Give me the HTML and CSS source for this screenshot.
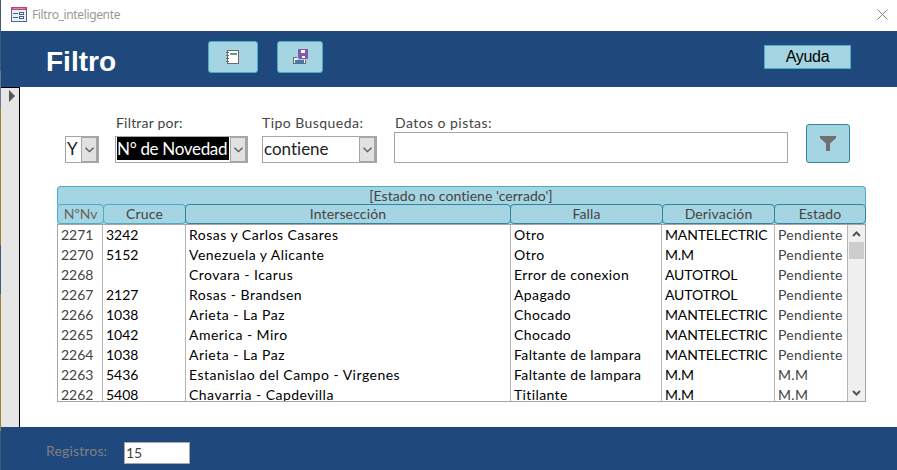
FILE: index.html
```html
<!DOCTYPE html>
<html lang="es">
<head>
<meta charset="utf-8">
<title>Filtro_inteligente</title>
<link rel="stylesheet" href="styles.css">
</head>
<body>
<div class="window">
  <div class="titlebar">
    <svg class="app-icon" width="16" height="15" viewBox="0 0 16 15" shape-rendering="crispEdges">
      <rect width="16" height="15" fill="#52678c"/><rect x="1" y="3" width="14" height="11" fill="#e9f0f8"/>
      <rect width="16" height="3" fill="#b94873"/><path d="M2 1.5h12" stroke="#d98aa8"/>
      <path d="M2 6.500h5M2 10.500h5" stroke="#3f5f91"/>
      <path d="M8.500 5.500h4v2h-4zM8.500 9.500h4v2h-4z" fill="#fff" stroke="#3f5f91"/>
    </svg>
    <span class="title">Filtro_inteligente</span>
    <svg class="close" width="11" height="11" viewBox="0 0 11 11"><path d="M.5.5l10 10M10.500.5l-10 10" stroke="#868686"/></svg>
  </div>
  <header class="header">
    <h1>Filtro</h1>
    <button class="btn btn-report" aria-label="Informe">
      <svg width="13" height="15" viewBox="0 0 13 15" shape-rendering="crispEdges">
        <path d="M1.500 .5h11v13h-11z" fill="#fff" stroke="#6a6a6a"/>
        <path d="M4 4h7" stroke="#5d9c83" stroke-width="2"/>
        <path d="M0 2.500h3M0 5.500h3M0 8.500h3M0 11.500h3" stroke="#6a6a6a"/>
      </svg>
    </button>
    <button class="btn btn-save" aria-label="Guardar">
      <svg width="15" height="16" viewBox="0 0 15 16" shape-rendering="crispEdges">
        <path d="M.5 8.500h12v6H.5z" fill="#fff" stroke="#6a6a6a"/><path d="M2 11h9v3H2z" fill="#4279b8"/>
        <path d="M4 0h11v11H4z" fill="#a4d5e2"/><path d="M5 0h10v10H6L5 9z" fill="#8757ab"/>
        <path d="M8 1h4v3H8zM9 7h3v2H9z" fill="#fff"/>
      </svg>
    </button>
    <button class="help">Ayuda</button>
  </header>
  <main class="body">
    <div class="selector"><svg width="6" height="12" viewBox="0 0 6 12"><path d="M0 0l6 6-6 6z" fill="#555"/></svg></div>
    <div class="content">
      <div class="filters">
        <div class="combo combo-y"><span>Y</span><i><svg width="9" height="6" viewBox="0 0 9 6"><path d="M.5.7l4 4 4-4"/></svg></i></div>
        <div class="field by"><label>Filtrar por:</label>
          <div class="combo"><span class="selected">N° de Novedad</span><i><svg width="9" height="6" viewBox="0 0 9 6"><path d="M.5.7l4 4 4-4"/></svg></i></div></div>
        <div class="field kind"><label>Tipo Busqueda:</label>
          <div class="combo"><span>contiene</span><i><svg width="9" height="6" viewBox="0 0 9 6"><path d="M.5.7l4 4 4-4"/></svg></i></div></div>
        <div class="field data"><label>Datos o pistas:</label><div class="textbox"></div></div>
        <button class="btn btn-filter" aria-label="Filtrar"><svg width="16" height="15" viewBox="0 0 16 15"><path d="M0 0h16v2l-6 5.500V15H6V7.500L0 2z" fill="#707070"/></svg></button>
      </div>
      <section class="results">
        <div class="criteria">[Estado no contiene 'cerrado']</div>
        <div class="heads">
          <div class="light nv">NºNv</div><div class="light">Cruce</div><div>Intersección</div><div>Falla</div><div>Derivación</div><div>Estado</div>
        </div>
        <div class="list">
          <div class="col gray"><p>2271</p><p>2270</p><p>2268</p><p>2267</p><p>2266</p><p>2265</p><p>2264</p><p>2263</p><p>2262</p></div>
          <div class="col"><p>3242</p><p>5152</p><p></p><p>2127</p><p>1038</p><p>1042</p><p>1038</p><p>5436</p><p>5408</p></div>
          <div class="col place"><p>Rosas y Carlos Casares</p><p>Venezuela y Alicante</p><p>Crovara - Icarus</p><p>Rosas - Brandsen</p><p>Arieta - La Paz</p><p>America - Miro</p><p>Arieta - La Paz</p><p>Estanislao del Campo - Virgenes</p><p>Chavarria - Capdevilla</p></div>
          <div class="col fault"><p>Otro</p><p>Otro</p><p>Error de conexion</p><p>Apagado</p><p>Chocado</p><p>Chocado</p><p>Faltante de lampara</p><p>Faltante de lampara</p><p>Titilante</p></div>
          <div class="col derived"><p>MANTELECTRIC</p><p>M.M</p><p>AUTOTROL</p><p>AUTOTROL</p><p>MANTELECTRIC</p><p>MANTELECTRIC</p><p>MANTELECTRIC</p><p>M.M</p><p>M.M</p></div>
          <div class="col gray state"><p>Pendiente</p><p>Pendiente</p><p>Pendiente</p><p>Pendiente</p><p>Pendiente</p><p>Pendiente</p><p>Pendiente</p><p>M.M</p><p>M.M</p></div>
          <div class="scroll">
            <svg width="9" height="6" viewBox="0 0 9 6"><path d="M1 5l3.500-3.500L8 5"/></svg>
            <div class="thumb"></div>
            <svg width="9" height="6" viewBox="0 0 9 6"><path d="M1 1l3.500 3.500L8 1"/></svg>
          </div>
        </div>
      </section>
    </div>
  </main>
  <footer class="footer"><span>Registros:</span><div class="count">15</div></footer>
</div>
</body>
</html>
```
FILE: styles.css
```css
* { box-sizing: border-box; }
body { margin: 0; width: 897px; height: 470px; overflow: hidden; background: #fff; color: #444; font: 14px/20px Lato, "Liberation Sans", sans-serif; font-variant-ligatures: none; }
svg { display: block; flex: none; }
p, h1 { margin: 0; }
button { padding: 0; font: inherit; }
.window { height: 470px; display: flex; flex-direction: column; border-left: 1px solid; border-image: linear-gradient(#3f5b7e 0 72px, #66789a 72px 109px, #98832f 109px 245px, #3f5b7e 245px 294px, #98832f 294px 430px, #3f5b7e 430px) 1; }
.titlebar { height: 31px; display: flex; align-items: center; padding: 0 9px 0 10px; }
.app-icon { margin-top: -3px; }
.title { margin: -1px auto 0 5px; font: 12px/20px "Noto Sans", sans-serif; letter-spacing: -.36px; color: #999; }
.close { margin-top: -2px; }
.header { height: 56px; display: flex; align-items: flex-start; background: #1f497d; }
h1 { width: 162px; margin: 15px 0 0 45px; color: #fff; font: bold 28px/32px "Liberation Sans", sans-serif; }
.btn { display: flex; align-items: center; justify-content: center; border: 1px solid #4bacc6; border-radius: 3px; background: #a5d5e2; }
.btn-report { width: 50px; height: 32px; margin-top: 10px; }
.btn-report svg { margin-left: -2px; }
.btn-save { width: 46px; height: 32px; margin: 10px 0 0 19px; }
.btn-save svg { margin-top: -1px; margin-left: 1px; }
.help { width: 87px; height: 24px; margin: 14px 46px 0 auto; border: 1px solid #4bacc6; background: #a5d5e2; color: #000; font: 16px/20px "Liberation Sans", sans-serif; padding-bottom: 1px; letter-spacing: -.3px; }
.body { height: 340px; display: flex; }
.selector { width: 19px; border: solid #000; border-width: 1px 1px 0 0; background: #e6e6e6; padding: 2px 0 0 8px; }
.content { padding: 26px 31px 0 37px; width: 877px; }
.filters { display: flex; height: 73px; padding-left: 8px; align-items: flex-start; }
.combo { display: flex; height: 27px; border: 1px solid #a6a6a6; background: #fff; color: #222; font-size: 17px; line-height: 23px; }
.combo span { flex: 1; padding: 0 0 0 1px; white-space: nowrap; overflow: hidden; }
.combo .selected { margin: 0 1px 2px; padding: 0; background: #000; color: #fff; letter-spacing: -.32px; }
.combo i { display: grid; place-items: center; width: 17px; border: 1px solid #a6a6a6; border-right-width: 2px; background: #e1e1e1; flex: none; }
.combo i path, .scroll path { fill: none; stroke: #555; stroke-width: 1.3; }
.combo-y { width: 34px; margin-top: 23px; }
.field label { display: block; height: 23px; padding-left: 1px; white-space: nowrap; letter-spacing: .2px; }
.by { width: 133px; margin-left: 16px; }
.kind { width: 115px; margin-left: 14px; }
.kind label { padding-left: 0; letter-spacing: .45px; }
.data { width: 394px; margin-left: 17px; }
.field.data label { height: 19px; letter-spacing: .45px; }
.textbox { height: 31px; border: 1px solid #a6a6a6; }
.btn-filter { width: 44px; height: 39px; margin: 11px 0 0 18px; border-color: #31859b; }
.btn-filter svg { margin-top: -1px; }
.results { width: 809px; }
.criteria { height: 19px; border: 1px solid #4bacc6; border-bottom: 0; border-radius: 4px 4px 0 0; background: #a5d5e2; line-height: 18px; text-align: center; padding-right: 1px; letter-spacing: .05px; }
.heads { display: grid; grid-template-columns: 46px 82px 325px 152px 112px 92px; height: 19px; background: #a5d5e2; }
.heads div { height: 20px; margin: -1px -1px 0 0; border: 1px solid #31859b; border-radius: 4px; line-height: 18px; text-align: center; letter-spacing: .15px; }
.heads div:last-child { margin-right: 0; }
.heads .light { border-color: #4bacc6; }
.heads .nv { color: #666; letter-spacing: -.1px; }
.list { display: grid; grid-template-columns: 45px 83px 325px 151px 113px 73px 17px; height: 178px; border: 1px solid #a6a6a6; color: #000; background: #fff; overflow: hidden; position: relative; }
.col { height: 176px; border-right: 1px solid #b5b5b5; padding-left: 3px; overflow: hidden; white-space: nowrap; }
.col p { height: 20px; line-height: 20px; }
.place { letter-spacing: .48px; }
.fault { letter-spacing: .38px; }
.derived { letter-spacing: -.15px; }
.state { letter-spacing: .3px; }
.gray { color: #444; }
.scroll { height: 176px; display: flex; flex-direction: column; align-items: center; background: #f0f0f0; padding: 6px 0 5px; }
.scroll path { stroke-width: 2; }
.scroll .thumb { width: 15px; height: 17px; margin: 5px 0 auto; background: #cdcdcd; }
.footer { height: 43px; display: flex; background: #1f497d; padding: 15px 0 0 45px; }
.footer span { width: 78px; color: #7f7f7f; line-height: 18px; letter-spacing: .15px; }
.count { width: 66px; height: 22px; border: 1px solid #a6a6a6; background: #fff; padding-left: 1px; line-height: 20px; }
```
